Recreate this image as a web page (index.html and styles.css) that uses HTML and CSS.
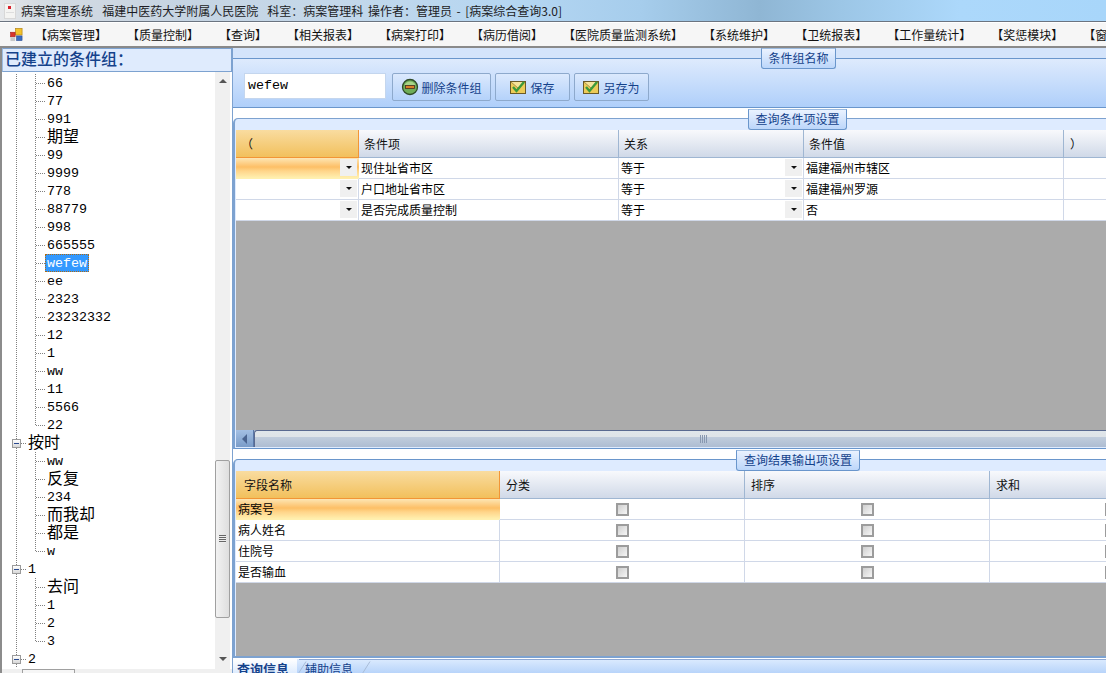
FILE: index.html
```html
<!DOCTYPE html>
<html lang="zh-CN">
<head>
<meta charset="utf-8">
<title>病案综合查询</title>
<link rel="stylesheet" href="styles.css">
</head>
<body>
<div class="app">
  <header class="titlebar">
    <svg class="title-icon" width="12" height="16" viewBox="0 0 12 16"><rect x="0.5" y="0.5" width="11" height="15" fill="#f4f4f2" stroke="#d8d8d8"/><rect x="4" y="3" width="3" height="3" fill="#d8202c"/><rect x="2" y="9" width="8" height="1" fill="#ddd"/></svg>
    <span class="title-text">病案管理系统&nbsp; 福建中医药大学附属人民医院&nbsp; 科室：病案管理科 操作者：管理员 - [病案综合查询3.0]</span>
  </header>
  <nav class="menubar">
    <svg class="menu-icon" width="13" height="14" viewBox="0 0 14 14"><rect x="6" y="0" width="7" height="7" fill="#f2c22c" stroke="#b98a1a" stroke-width="0.8"/><rect x="0.5" y="4" width="5" height="5" fill="#d8342c" stroke="#a02020" stroke-width="0.6"/><rect x="7" y="8" width="6" height="5" fill="#3a6cc0" stroke="#2a4a90" stroke-width="0.6"/><rect x="0.5" y="9.5" width="5" height="4" fill="#c8c8c8"/></svg>
    <span class="menu-item">【病案管理】</span>
    <span class="menu-item">【质量控制】</span>
    <span class="menu-item">【查询】</span>
    <span class="menu-item">【相关报表】</span>
    <span class="menu-item">【病案打印】</span>
    <span class="menu-item">【病历借阅】</span>
    <span class="menu-item">【医院质量监测系统】</span>
    <span class="menu-item">【系统维护】</span>
    <span class="menu-item">【卫统报表】</span>
    <span class="menu-item">【工作量统计】</span>
    <span class="menu-item">【奖惩模块】</span>
    <span class="menu-item">【窗口】</span>
  </nav>
  <main class="workspace">
    <aside class="left-panel">
      <h2 class="left-head">已建立的条件组：</h2>
      <div class="tree-wrap">
        <div class="tree">
          <div class="row child"><i class="conn"></i><span class="lbl">66</span></div>
          <div class="row child"><i class="conn"></i><span class="lbl">77</span></div>
          <div class="row child"><i class="conn"></i><span class="lbl">991</span></div>
          <div class="row child"><i class="conn"></i><span class="lbl cjk">期望</span></div>
          <div class="row child"><i class="conn"></i><span class="lbl">99</span></div>
          <div class="row child"><i class="conn"></i><span class="lbl">9999</span></div>
          <div class="row child"><i class="conn"></i><span class="lbl">778</span></div>
          <div class="row child"><i class="conn"></i><span class="lbl">88779</span></div>
          <div class="row child"><i class="conn"></i><span class="lbl">998</span></div>
          <div class="row child"><i class="conn"></i><span class="lbl">665555</span></div>
          <div class="row child"><i class="conn"></i><span class="lbl selected">wefew</span></div>
          <div class="row child"><i class="conn"></i><span class="lbl">ee</span></div>
          <div class="row child"><i class="conn"></i><span class="lbl">2323</span></div>
          <div class="row child"><i class="conn"></i><span class="lbl">23232332</span></div>
          <div class="row child"><i class="conn"></i><span class="lbl">12</span></div>
          <div class="row child"><i class="conn"></i><span class="lbl">1</span></div>
          <div class="row child"><i class="conn"></i><span class="lbl">ww</span></div>
          <div class="row child"><i class="conn"></i><span class="lbl">11</span></div>
          <div class="row child"><i class="conn"></i><span class="lbl">5566</span></div>
          <div class="row child last"><i class="conn"></i><span class="lbl">22</span></div>
          <div class="row root"><b class="box"></b><i class="conn short"></i><span class="lbl cjk">按时</span></div>
          <div class="row child"><i class="conn"></i><span class="lbl">ww</span></div>
          <div class="row child"><i class="conn"></i><span class="lbl cjk">反复</span></div>
          <div class="row child"><i class="conn"></i><span class="lbl">234</span></div>
          <div class="row child"><i class="conn"></i><span class="lbl cjk">而我却</span></div>
          <div class="row child"><i class="conn"></i><span class="lbl cjk">都是</span></div>
          <div class="row child last"><i class="conn"></i><span class="lbl">w</span></div>
          <div class="row root"><b class="box"></b><i class="conn short"></i><span class="lbl">1</span></div>
          <div class="row child"><i class="conn"></i><span class="lbl cjk">去问</span></div>
          <div class="row child"><i class="conn"></i><span class="lbl">1</span></div>
          <div class="row child"><i class="conn"></i><span class="lbl">2</span></div>
          <div class="row child last"><i class="conn"></i><span class="lbl">3</span></div>
          <div class="row root"><b class="box"></b><i class="conn short"></i><span class="lbl">2</span></div>
        </div>
        <div class="vscroll">
          <span class="arrow up"></span>
          <div class="vtrack"><div class="vthumb"><span class="grip"></span></div></div>
          <span class="arrow down"></span>
        </div>
      </div>
      <div class="tree-hscroll"><div class="tree-hthumb"></div></div>
    </aside>
    <section class="right-panel">
      <div class="group-name">
        <div class="legend legend-name">条件组名称</div>
        <div class="name-body">
          <div class="name-input">wefew</div>
          <button class="btn btn-del"><svg width="18" height="18" viewBox="0 0 18 18"><circle cx="9" cy="9" r="7.5" fill="#6fae58" stroke="#2f4a28" stroke-width="1.3"/><path d="M3.5 7a6 6 0 0 1 11 0z" fill="#a8d488"/><rect x="4.5" y="7.5" width="9" height="3" fill="#d97f28" stroke="#4a3020" stroke-width="0.8"/></svg>删除条件组</button>
          <button class="btn btn-save"><svg width="16" height="16" viewBox="0 0 16 16"><rect x="0.5" y="2.5" width="15" height="12" fill="#eccb58" stroke="#6a5a28"/><path d="M1 3l7 6 7-6" fill="#f6e49a" stroke="#8a7430" stroke-width="0.7"/><path d="M3 8l3.5 4L14 3" fill="none" stroke="#3c9a3a" stroke-width="2.4"/></svg>保存</button>
          <button class="btn btn-as"><svg width="16" height="16" viewBox="0 0 16 16"><rect x="0.5" y="2.5" width="15" height="12" fill="#eccb58" stroke="#6a5a28"/><path d="M1 3l7 6 7-6" fill="#f6e49a" stroke="#8a7430" stroke-width="0.7"/><path d="M3 8l3.5 4L14 3" fill="none" stroke="#3c9a3a" stroke-width="2.4"/></svg>另存为</button>
        </div>
      </div>
      <div class="group group-cond">
        <div class="legend legend-cond">查询条件项设置</div>
        <div class="grid cond-grid">
          <div class="gh cur center-pad">（</div><div class="gh">条件项</div><div class="gh">关系</div><div class="gh">条件值</div><div class="gh paren">）</div>
        </div>
        <div class="grid cond-grid gr">
          <div class="gc cur-cell combo"><span class="drop"></span></div><div class="gc">现住址省市区</div><div class="gc combo">等于<span class="drop"></span></div><div class="gc">福建福州市辖区</div><div class="gc"></div>
        </div>
        <div class="grid cond-grid gr">
          <div class="gc combo"><span class="drop"></span></div><div class="gc">户口地址省市区</div><div class="gc combo">等于<span class="drop"></span></div><div class="gc">福建福州罗源</div><div class="gc"></div>
        </div>
        <div class="grid cond-grid gr">
          <div class="gc combo"><span class="drop"></span></div><div class="gc">是否完成质量控制</div><div class="gc combo">等于<span class="drop"></span></div><div class="gc">否</div><div class="gc"></div>
        </div>
        <div class="gray"></div>
        <div class="hscroll">
          <span class="hbtn"><span class="harrow"></span></span>
          <div class="hthumb"><span class="hgrip"></span></div>
        </div>
      </div>
      <div class="group group-out">
        <div class="legend legend-out">查询结果输出项设置</div>
        <div class="grid out-grid">
          <div class="gh cur field-pad">字段名称</div><div class="gh">分类</div><div class="gh">排序</div><div class="gh">求和</div>
        </div>
        <div class="grid out-grid gr">
          <div class="gc cur-cell">病案号</div><div class="gc ck"><span class="check"></span></div><div class="gc ck"><span class="check"></span></div><div class="gc ck-end"><span class="check"></span></div>
        </div>
        <div class="grid out-grid gr">
          <div class="gc">病人姓名</div><div class="gc ck"><span class="check"></span></div><div class="gc ck"><span class="check"></span></div><div class="gc ck-end"><span class="check"></span></div>
        </div>
        <div class="grid out-grid gr">
          <div class="gc">住院号</div><div class="gc ck"><span class="check"></span></div><div class="gc ck"><span class="check"></span></div><div class="gc ck-end"><span class="check"></span></div>
        </div>
        <div class="grid out-grid gr">
          <div class="gc">是否输血</div><div class="gc ck"><span class="check"></span></div><div class="gc ck"><span class="check"></span></div><div class="gc ck-end"><span class="check"></span></div>
        </div>
        <div class="gray"></div>
      </div>
      <div class="tabs">
        <span class="tab active">查询信息</span>
        <svg class="slant" width="10" height="15" viewBox="0 0 10 15"><path d="M0.5 15L9 1.5" fill="none" stroke="#a8bcd8"/></svg>
        <span class="tab">辅助信息</span>
        <svg class="slant" width="10" height="15" viewBox="0 0 10 15"><path d="M0.5 15L9 1.5" fill="none" stroke="#a8bcd8"/></svg>
      </div>
    </section>
  </main>
</div>
</body>
</html>
```
FILE: styles.css
```css
* { box-sizing: border-box; }
html, body { margin: 0; padding: 0; }
body {
  width: 1106px;
  height: 673px;
  overflow: hidden;
  background: #fff;
  font-family: "Noto Sans CJK SC", "Liberation Sans", sans-serif;
  font-size: 12px;
  color: #000;
}
.app { width: 1106px; height: 673px; display: flex; flex-direction: column; overflow: hidden; }

.titlebar {
  flex: 0 0 22px;
  display: flex;
  align-items: center;
  padding-left: 4px;
  gap: 5px;
  border-bottom: 1px solid #6b7480;
  background: linear-gradient(90deg, #e6e8ea 0, #d4dbe2 40px, #c6d4e2 180px, #c4d8ea 330px, #b4d6f2 520px, #a6cdec 640px, #8fb6d4 760px, #9cc6e6 840px, #acd8fb 960px, #a8d6fa 1106px);
}
.title-icon { flex: none; }
.title-text { color: #1c1c24; white-space: nowrap; line-height: 18px; word-spacing: 1.9px; }

.menubar {
  flex: 0 0 26px;
  display: flex;
  align-items: center;
  gap: 20px;
  padding-left: 10px;
  background: #f6f6f6;
  border-top: 1px solid #fff;
  border-bottom: 2px solid #8a8a8a;
  white-space: nowrap;
  overflow: hidden;
}
.menu-icon { flex: none; margin-right: -8px; }
.menu-item { flex: none; color: #111; }

.workspace { flex: 1; display: flex; min-height: 0; }

.left-panel {
  flex: 0 0 232px;
  display: flex;
  flex-direction: column;
  border-left: 2px solid #8c8c8c;
  min-height: 0;
}
.left-head {
  flex: 0 0 24px;
  margin: 0;
  padding-left: 2px;
  font-size: 16px;
  font-weight: 500;
  line-height: 19px;
  color: #15428b;
  background: #dfebfd;
  border: 1px solid #7da2d0;
  border-left-color: #9cbbe0;
  white-space: nowrap;
}
.tree-wrap { flex: 1; display: flex; min-height: 0; }
.tree { flex: 1; padding-top: 2px; overflow: hidden; background: #fff; }

.row {
  display: flex;
  align-items: center;
  height: 18px;
  background: repeating-linear-gradient(#808080 0 1px, transparent 1px 2px) 14px 0 / 1px 100% no-repeat;
}
.row.child {
  background:
    repeating-linear-gradient(#808080 0 1px, transparent 1px 2px) 14px 0 / 1px 100% no-repeat,
    repeating-linear-gradient(#808080 0 1px, transparent 1px 2px) 33px 0 / 1px 100% no-repeat;
  padding-left: 34px;
}
.row.child.last {
  background:
    repeating-linear-gradient(#808080 0 1px, transparent 1px 2px) 14px 0 / 1px 100% no-repeat,
    repeating-linear-gradient(#808080 0 1px, transparent 1px 2px) 33px 0 / 1px 50% no-repeat;
}
.row.root { padding-left: 10px; }
.conn {
  flex: none;
  width: 9px;
  height: 0;
  border-top: 1px dotted #808080;
}
.conn.short { width: 5px; }
.box {
  flex: none;
  width: 9px;
  height: 9px;
  border: 1px solid #9a9a9a;
  background: linear-gradient(#fff, #d8d8d8);
  display: flex;
  align-items: center;
  justify-content: center;
}
.box::after { content: ""; width: 5px; height: 1px; background: #2a4a90; }
.lbl {
  font-family: "Liberation Mono", "Noto Sans CJK SC", monospace;
  font-size: 13.33px;
  line-height: 18px;
  padding: 2px 2px 0;
  white-space: nowrap;
  color: #000;
}
.lbl.cjk { font-family: "Noto Sans CJK SC", sans-serif; font-size: 16px; padding: 0 2px 4px; }
.lbl.selected {
  padding-top: 1px;
  line-height: 17px;
  background: #3399ff;
  color: #fff;
  outline: 1px dotted #b06a10;
  outline-offset: -1px;
}

.vscroll {
  flex: 0 0 15px;
  margin-right: 2px;
  display: flex;
  flex-direction: column;
  align-items: center;
  background: #f0f0f0;
}
.arrow { flex: none; width: 0; height: 0; border-left: 4px solid transparent; border-right: 4px solid transparent; }
.arrow.up { border-bottom: 4px solid #555; margin: 7px 0 3px; }
.arrow.down { border-top: 4px solid #555; margin: 6px 0 8px; }
.vtrack { flex: 1; width: 100%; padding-top: 374px; }
.vthumb {
  height: 158px;
  border: 1px solid #a0a0a0;
  border-radius: 2px;
  background: linear-gradient(90deg, #f2f2f2, #dedede);
  display: flex;
  align-items: center;
  justify-content: center;
}
.grip { width: 7px; height: 8px; background: repeating-linear-gradient(#666 0 1px, #eee 1px 2px); }

.tree-hscroll { flex: 0 0 4px; background: #f0f0f0; padding-left: 20px; }
.tree-hthumb { width: 53px; height: 4px; border: 1px solid #a0a0a0; border-bottom: 0; background: #f6f6f6; }

.right-panel {
  flex: 1;
  min-width: 0;
  display: flex;
  flex-direction: column;
  background: #fff;
  border-left: 1px solid #7da2d0;
  overflow: hidden;
}
.legend {
  position: absolute;
  height: 21px;
  font-size: 12px;
  line-height: 17px;
  text-align: center;
  color: #15428b;
  white-space: nowrap;
  border: 1px solid #6a96cc;
  border-top: 1px solid #9cbbe0;
  border-radius: 0 0 3px 3px;
  background: linear-gradient(#eaf2ff, #bcd6fa);
}
.legend-name { left: 528px; top: -10px; width: 75px; }
.legend-cond { left: 513px; top: -10px; width: 99px; }
.legend-out { left: 501px; top: -10px; width: 124px; }

.group-name {
  position: relative;
  flex: 0 0 60px;
  border-top: 10px solid #d4e4fb;
  border-bottom: 1px solid #6a96cc;
  background: linear-gradient(#dfebfd, #afcffa);
}
.group-name::before { content: ""; position: absolute; left: 0; right: 0; top: 0; height: 1px; background: #6a96cc; }
.name-body { display: flex; align-items: flex-start; padding: 15px 0 0 11px; }
.name-input {
  width: 142px;
  height: 26px;
  margin-right: 6px;
  padding-left: 3px;
  background: #fff;
  border: 1px solid #c4d6ee;
  font-family: "Liberation Mono", monospace;
  font-size: 13.33px;
  line-height: 24px;
}
.btn {
  height: 28px;
  margin: 0 4px 0 0;
  padding: 0;
  display: inline-flex;
  align-items: center;
  justify-content: center;
  gap: 4px;
  font: inherit;
  color: #15428b;
  border: 1px solid #8da9cc;
  border-radius: 2px;
  background: linear-gradient(#dbe9fd, #b4d2fa);
}
.btn-del { width: 99px; gap: 2px; }
.btn-save { width: 75px; }
.btn-as { width: 75px; }

.group {
  position: relative;
  display: flex;
  flex-direction: column;
  padding: 11px 0 0 1px;
  background: #deebff;
  border-top: 1px solid #7da2d0;
  border-left: 2px solid #7da2d0;
  border-top-left-radius: 5px;
  min-height: 0;
}
.group-cond { flex: 0 0 331px; margin-top: 10px; padding-bottom: 1px; border-bottom: 1px solid #6a96cc; }
.group-out { flex: 0 0 199px; margin-top: 10px; border-top-color: #6a96cc; border-bottom: 2px solid #7da2d0; }

.grid { flex: none; display: grid; }
.cond-grid { grid-template-columns: 123px 260px 185px 260px 100px; }
.out-grid { grid-template-columns: 264px 245px 245px 120px; }

.gh {
  height: 28px;
  padding-left: 5px;
  line-height: 27px;
  background: linear-gradient(#f8f9fc, #d0d9e8);
  border-right: 1px solid #9fb6d2;
  border-bottom: 1px solid #9fb6d2;
  color: #111;
  white-space: nowrap;
}
.out-grid .gh { padding-left: 6px; }
.gh.cur {
  background: linear-gradient(#f9dca0, #f2c05c);
  border-right-color: #f29536;
  border-bottom-color: #f29536;
}
.center-pad { padding-left: 5px; }
.out-grid .field-pad { padding-left: 8px; }
.paren { padding-left: 6px; }

.gr { height: 21px; }
.gc {
  height: 21px;
  padding-left: 2px;
  line-height: 20px;
  background: #fff;
  border-right: 1px solid #d0d8e8;
  border-bottom: 1px solid #d0d8e8;
  white-space: nowrap;
  overflow: hidden;
}
.gc.cur-cell {
  background: linear-gradient(#fde6b4 0, #fdbf66 45%, #ffd58a 65%, #fff0b0 100%);
  border-right-color: transparent;
  border-bottom-color: #fff0b0;
}
.combo { display: flex; justify-content: space-between; align-items: flex-start; }
.drop {
  flex: none;
  width: 17px;
  height: 17px;
  margin: 1px 1px 0 auto;
  background: #f0f0f0;
  display: flex;
  align-items: center;
  justify-content: center;
}
.drop::after { content: ""; width: 0; height: 0; border-left: 3px solid transparent; border-right: 3px solid transparent; border-top: 3px solid #111; }
.out-grid .ck { display: flex; align-items: center; justify-content: center; padding-left: 0; }
.out-grid .ck-end { display: flex; align-items: center; justify-content: flex-start; padding-left: 115px; }
.check {
  flex: none;
  width: 13px;
  height: 13px;
  border: 2px solid #9c9c9c;
  background: linear-gradient(135deg, #cfcfcf, #f6f6f6);
}
.gray { flex: 1; min-height: 0; background: #ababab; }

.hscroll {
  flex: 0 0 17px;
  display: flex;
  background: #b8c6d8;
}
.hbtn {
  flex: 0 0 18px;
  display: flex;
  align-items: center;
  justify-content: center;
  background: linear-gradient(#a4c0e4, #7a9cc8);
  border-right: 1px solid #5a78a8;
}
.harrow { width: 0; height: 0; border-top: 5px solid transparent; border-bottom: 5px solid transparent; border-right: 5px solid #4a6490; }
.hthumb {
  flex: 1;
  display: flex;
  align-items: center;
  padding-left: 445px;
  border-top: 1px solid #5a6a90;
  border-left: 1px solid #5a6a90;
  border-radius: 3px 0 0 0;
  background: linear-gradient(#e0e6ea 0, #dfe4e8 35%, #c0ccdc 40%, #aebdd2 100%);
}
.hgrip { width: 8px; height: 8px; background: repeating-linear-gradient(90deg, #8898b0 0 1px, transparent 1px 2px); }

.tabs {
  flex: 1;
  display: flex;
  align-items: flex-start;
  padding: 0;
  border-top: 1px solid #fff;
  background:
    linear-gradient(#8ea8d4, #8ea8d4) 66px 0 / 100% 1px no-repeat,
    linear-gradient(#dcebfe, #b8d4fa);
  overflow: hidden;
}
.tab { flex: none; margin-top: 2px; font-size: 12px; line-height: 15px; color: #15428b; }
.tab.active {
  width: 64px;
  height: 15px;
  margin-top: 0;
  padding: 2px 0 0 4px;
  font-size: 13px;
  font-weight: 700;
  background: linear-gradient(#fff, #dcebfe);
}
.slant { flex: none; margin: 1px -2px 0 0; }
.tab + .slant + .tab { margin-right: 8px; }
```
